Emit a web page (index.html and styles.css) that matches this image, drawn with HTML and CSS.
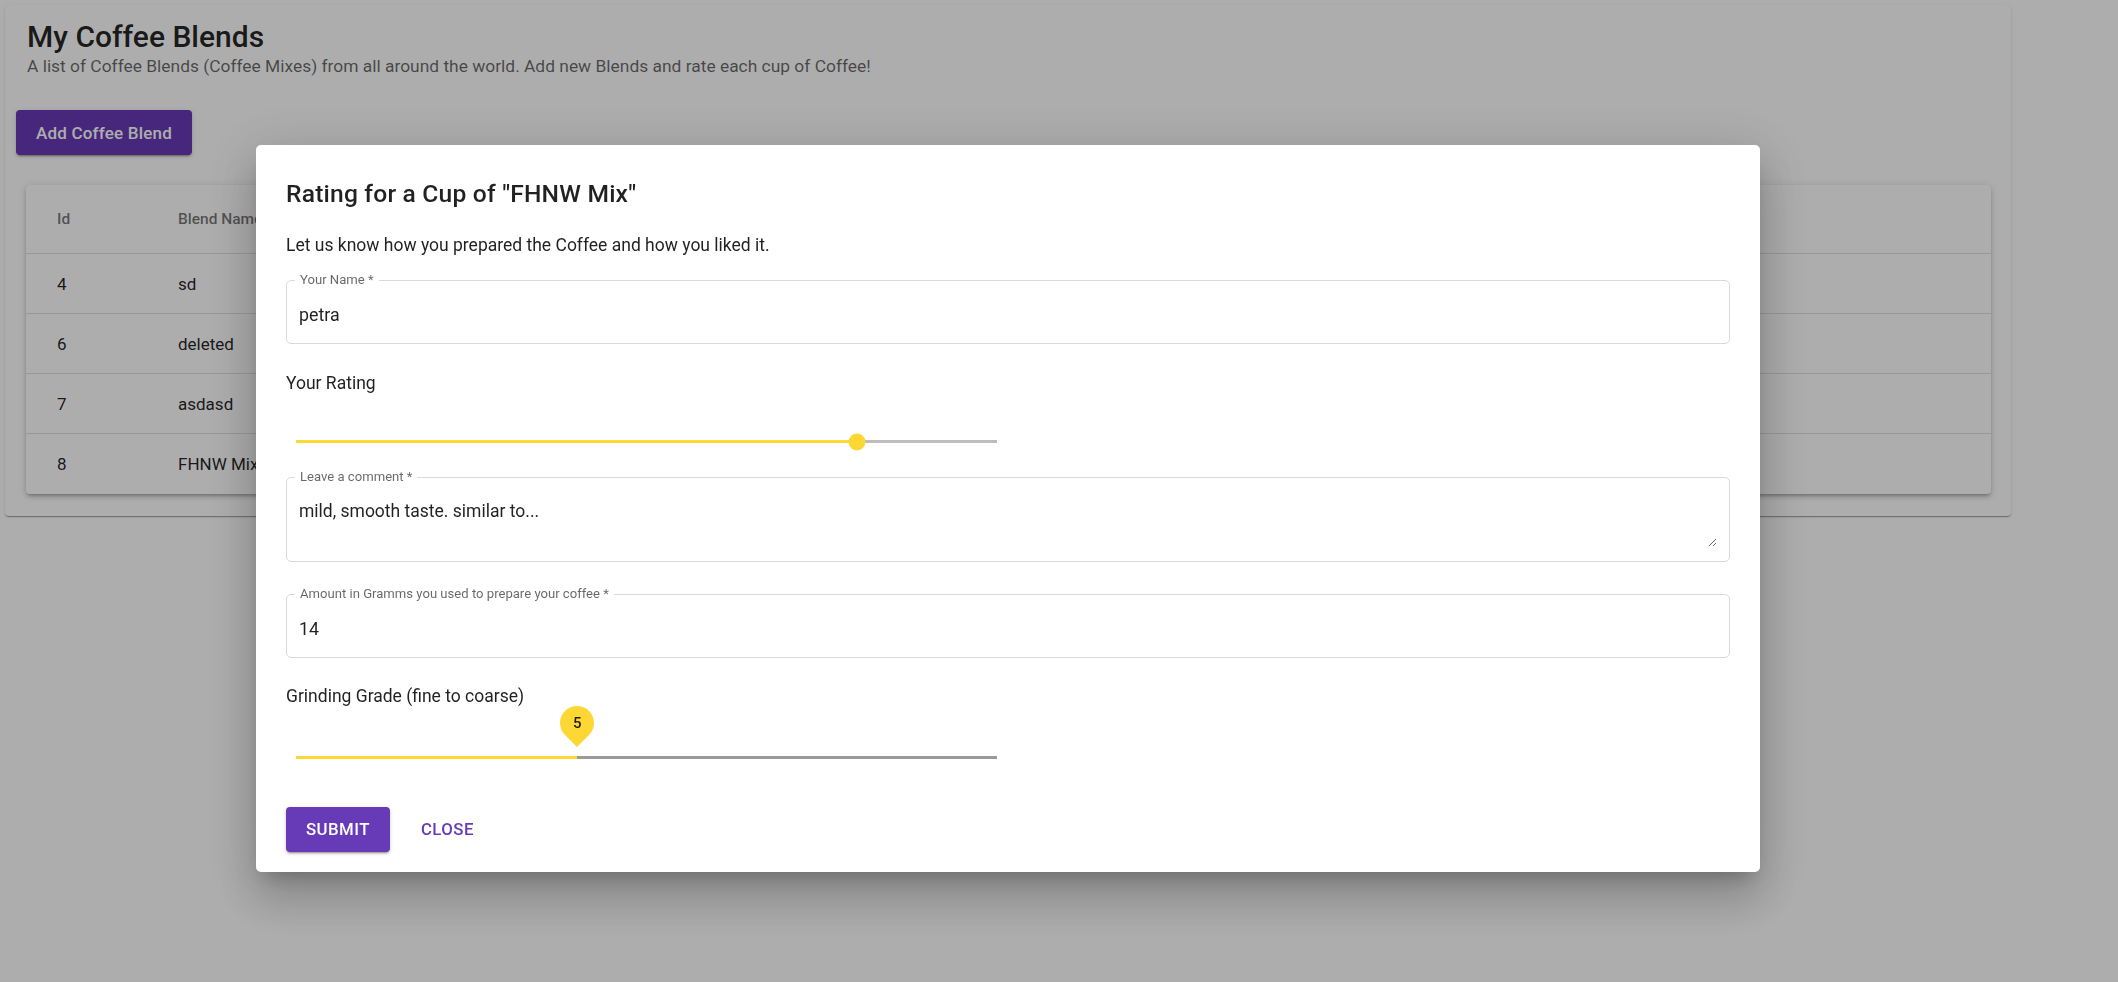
FILE: index.html
```html
<!DOCTYPE html>
<html lang="en">
<head>
<meta charset="utf-8">
<title>My Coffee Blends</title>
<link rel="stylesheet" href="styles.css">
</head>
<body>
<main class="page">
  <section class="card">
    <header class="card-head">
      <h1 class="card-title">My Coffee Blends</h1>
      <p class="card-sub">A list of Coffee Blends (Coffee Mixes) from all around the world. Add new Blends and rate each cup of Coffee!</p>
    </header>
    <button class="btn btn-primary btn-add" type="button">Add Coffee Blend</button>
    <div class="table-wrap">
      <table class="blends">
        <thead>
          <tr><th class="col-id">Id</th><th>Blend Name</th></tr>
        </thead>
        <tbody>
          <tr><td>4</td><td>sd</td></tr>
          <tr><td>6</td><td>deleted</td></tr>
          <tr><td>7</td><td>asdasd</td></tr>
          <tr><td>8</td><td>FHNW Mix</td></tr>
        </tbody>
      </table>
    </div>
  </section>
</main>

<div class="backdrop">
  <div class="dialog" role="dialog" aria-labelledby="dlg-title">
    <h2 class="dialog-title" id="dlg-title">Rating for a Cup of "FHNW Mix"</h2>
    <p class="dialog-text">Let us know how you prepared the Coffee and how you liked it.</p>

    <fieldset class="field">
      <legend>Your Name *</legend>
      <input type="text" value="petra">
    </fieldset>

    <p class="slider-label">Your Rating</p>
    <div class="slider slider-rating">
      <div class="slider-fill" style="width:80%"></div>
      <span class="slider-thumb" style="left:80%"></span>
    </div>

    <fieldset class="field field-multi">
      <legend>Leave a comment *</legend>
      <textarea>mild, smooth taste. similar to...</textarea>
    </fieldset>

    <fieldset class="field field-amount">
      <legend>Amount in Gramms you used to prepare your coffee *</legend>
      <input type="text" value="14">
    </fieldset>

    <p class="slider-label slider-label-grind">Grinding Grade (fine to coarse)</p>
    <div class="slider slider-grind">
      <div class="slider-fill" style="width:40.1%"></div>
      <span class="value-label" style="left:40.1%"><span class="value-text">5</span></span>
    </div>

    <div class="actions">
      <button class="btn btn-primary btn-caps" type="button">Submit</button>
      <button class="btn btn-text btn-caps" type="button">Close</button>
    </div>
  </div>
</div>
</body>
</html>
```

FILE: styles.css
```css
* { box-sizing: border-box; }

html, body {
  margin: 0;
  padding: 0;
}

body {
  width: 2118px;
  height: 982px;
  overflow: hidden;
  background: #ffffff;
  color: rgba(0, 0, 0, 0.87);
  font-family: Roboto, "Noto Sans", "Liberation Sans", sans-serif;
}

/* ---------- page ---------- */
.page {
  padding: 5px;
}

.card {
  width: 2006px;
  background: #ffffff;
  border-radius: 4px;
  padding: 15px 20px 22px 11px;
  box-shadow: 0 2px 1px -1px rgba(0,0,0,0.2), 0 1px 1px 0 rgba(0,0,0,0.14), 0 1px 3px 0 rgba(0,0,0,0.12);
}

.card-head {
  padding-left: 11px;
}

.card-title {
  margin: 0;
  font-size: 30px;
  line-height: 34px;
  font-weight: 500;
}

.card-sub {
  margin: 0;
  font-size: 17.4px;
  line-height: 24px;
  color: rgba(0, 0, 0, 0.6);
}

.btn {
  font-family: inherit;
  font-size: 16.8px;
  font-weight: 500;
  letter-spacing: 0.46px;
  height: 45px;
  padding: 0 20px;
  border: 0;
  border-radius: 4px;
  cursor: pointer;
  background: transparent;
}

.btn-primary {
  background: #673ab7;
  color: #ffffff;
  box-shadow: 0 3px 1px -2px rgba(0,0,0,0.2), 0 2px 2px 0 rgba(0,0,0,0.14), 0 1px 5px 0 rgba(0,0,0,0.12);
}

.btn-text {
  color: #673ab7;
}

.btn-caps {
  text-transform: uppercase;
}

.btn-add {
  display: block;
  margin-top: 32px;
  font-size: 17px;
  letter-spacing: 0.2px;
}

.table-wrap {
  margin: 30px 0 0 10px;
  background: #ffffff;
  border-radius: 4px;
  box-shadow: 0 3px 3px -2px rgba(0,0,0,0.2), 0 3px 4px 0 rgba(0,0,0,0.14), 0 1px 8px 0 rgba(0,0,0,0.12);
}

.blends {
  width: 100%;
  border-collapse: separate;
  border-spacing: 0;
}

.blends th,
.blends td {
  text-align: left;
  padding: 0 0 0 31px;
  border-bottom: 1px solid #e0e0e0;
}

.blends th {
  height: 69px;
  font-size: 15.5px;
  font-weight: 500;
  color: rgba(0, 0, 0, 0.55);
}

.blends td {
  height: 60px;
  font-size: 17px;
}

.blends tbody tr:last-child td {
  border-bottom: 0;
}

.col-id {
  width: 121px;
}

/* ---------- dialog ---------- */
.backdrop {
  position: fixed;
  inset: 0;
  background: rgba(0, 0, 0, 0.32);
  padding: 145px 0 0 256px;
}

.dialog {
  width: 1504px;
  background: #ffffff;
  border-radius: 5px;
  padding: 30px 30px 20px;
  box-shadow: 0 13px 17px -8px rgba(0,0,0,0.2), 0 28px 44px 3px rgba(0,0,0,0.14), 0 10px 53px 9px rgba(0,0,0,0.12);
}

.dialog-title {
  margin: 0;
  font-size: 24.6px;
  line-height: 37px;
  font-weight: 500;
  letter-spacing: 0.2px;
}

.dialog-text {
  margin: 20px 0 0;
  font-size: 17.5px;
  line-height: 27px;
}

.field {
  margin: 13px 0 0;
  padding: 0 12px 3px;
  min-width: 0;
  border: 1px solid #dadada;
  border-radius: 5px;
}

.field legend {
  margin-left: -4px;
  padding: 0 5px;
  font-size: 13.1px;
  line-height: 16px;
  color: rgba(0, 0, 0, 0.6);
}

.field input {
  display: block;
  width: 100%;
  height: 52px;
  padding: 0;
  border: 0;
  outline: none;
  background: transparent;
  font-family: inherit;
  font-size: 17.8px;
  color: rgba(0, 0, 0, 0.87);
}

.field-multi {
  margin-top: 26px;
  padding-bottom: 14px;
}

.field-multi textarea {
  display: block;
  width: 100%;
  height: 62px;
  padding: 14px 0 0;
  border: 0;
  outline: none;
  resize: vertical;
  background: transparent;
  font-family: inherit;
  font-size: 17.5px;
  line-height: 25px;
  color: rgba(0, 0, 0, 0.87);
}

.field-amount {
  margin-top: 24px;
}

.slider-label {
  margin: 26px 0 0;
  font-size: 17.5px;
  line-height: 27px;
}

.slider-label-grind {
  margin-top: 25px;
}

.slider {
  position: relative;
  display: flex;
  width: 701px;
  margin-left: 10px;
}

.slider-fill {
  height: 100%;
  background: #fdd835;
}

.slider-rating {
  margin-top: 43px;
  height: 3px;
  background: #bdbdbd;
}

.slider-grind {
  margin-top: 46px;
  height: 2.5px;
  background: #9a9a9a;
}

.slider-thumb {
  position: absolute;
  top: 50%;
  width: 17px;
  height: 17px;
  border-radius: 50%;
  background: #fdd835;
  transform: translate(-50%, -50%);
}

.value-label {
  position: absolute;
  top: -50px;
  width: 34px;
  height: 34px;
  margin-left: -17px;
  border-radius: 50% 50% 50% 0;
  background: #fdd835;
  transform: rotate(-45deg);
  display: flex;
  align-items: center;
  justify-content: center;
}

.value-text {
  transform: rotate(45deg);
  font-size: 15px;
  font-weight: 500;
  color: rgba(0, 0, 0, 0.87);
}

.actions {
  display: flex;
  gap: 11px;
  margin-top: 48px;
}
```
